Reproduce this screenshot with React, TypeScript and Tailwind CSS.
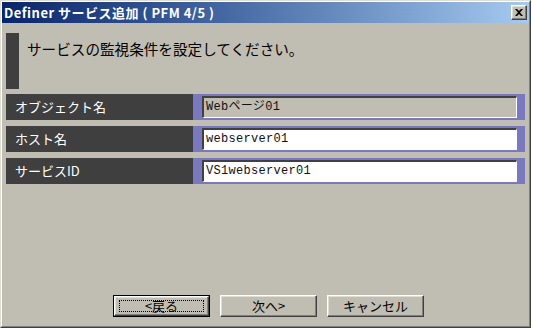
const jp = "font-['MS_Gothic','Noto_Sans_CJK_JP',sans-serif]";

const raised =
  "border border-t-white border-l-white border-r-[#404040] border-b-[#404040] shadow-[inset_-1px_-1px_0_#808080,inset_1px_1px_0_#dfdcd3]";

type Row = { label: string; value: string; disabled?: boolean };

const rows: Row[] = [
  { label: "オブジェクト名", value: "Webページ01", disabled: true },
  { label: "ホスト名", value: "webserver01" },
  { label: "サービスID", value: "VS1webserver01" },
];

const FieldRow = ({ label, value, disabled }: Row) => (
  <div className="flex h-[26px]">
    <div className={`w-[187px] bg-[#3f3f3f] text-white text-[13px] leading-[26px] pl-[9px] ${jp}`}>{label}</div>
    <div className="flex-1 bg-[#7a78bf] pl-[9px] pr-[8px] pt-[2px]">
      <div
        className={`h-[22px] border-t-2 border-l-2 border-t-[#404040] border-l-[#404040] border-b border-r border-b-white border-r-white ${
          disabled ? "bg-[#c0bdb2]" : "bg-white"
        } pl-[2px] text-[12px] leading-[19px] text-[#111] font-['Liberation_Mono','Noto_Sans_CJK_JP',monospace] tracking-[0.3px]`}
      >
        {value}
      </div>
    </div>
  </div>
);

const DialogButton = ({ text, isDefault }: { text: string; isDefault?: boolean }) => (
  <button
    type="button"
    className={`w-[97px] h-[22px] ${isDefault ? "border border-black" : ""} bg-[#c0bdb2] p-0`}
  >
    <div className={`w-full h-full ${raised} flex items-center justify-center`}>
      <div
        className={`${isDefault ? "border border-dotted border-black" : "border border-transparent"} w-[calc(100%-8px)] h-[calc(100%-6px)] flex items-center justify-center text-[13px] text-black ${jp}`}
      >
        {text}
      </div>
    </div>
  </button>
);

export default function App() {
  return (
    <div className="w-[533px] h-[330px] bg-white">
      <div className="w-[531px] h-[328px] border border-t-[#e0ddd5] border-l-[#e0ddd5] border-r-[#404040] border-b-[#404040]">
        <div className="w-full h-full flex flex-col bg-[#c0bdb2] border border-t-white border-l-white border-r-[#808080] border-b-[#808080]">
          {/* title bar */}
          <div className="h-[21px] flex items-center justify-between bg-gradient-to-r from-[#0a246a] to-[#a6caf0] pl-[2px] pr-[2px]">
            <span className={`text-white font-bold text-[13px] tracking-[0.5px] ${jp}`}>
              Definer サービス追加 ( PFM 4/5 )
            </span>
            <div className={`w-[16px] h-[15px] ${raised} bg-[#c0bdb2] flex items-center justify-center`}>
              <svg width="8" height="7" viewBox="0 0 8 7">
                <path d="M0 0h2l2 2 2-2h2L5 3.5 8 7H6L4 5 2 7H0l3-3.5z" fill="#000" />
              </svg>
            </div>
          </div>

          <div className="flex-1 flex flex-col px-[4px] pb-[9px]">
            {/* heading */}
            <div className="mt-[10px] h-[56px] flex">
              <div className="w-[13px] bg-[#3f3f3f]" />
              <div className={`pl-[8px] pt-[5px] text-[14.6px] text-black ${jp}`}>
                サービスの監視条件を設定してください。
              </div>
            </div>

            <div className="mt-[5px] flex flex-col gap-[6px]">
              {rows.map((r) => (
                <FieldRow key={r.label} {...r} />
              ))}
            </div>

            <div className="flex-1" />

            <div className="flex justify-center gap-[10px] pl-[6px]">
              <DialogButton text="<戻る" isDefault />
              <DialogButton text="次へ>" />
              <DialogButton text="キャンセル" />
            </div>
          </div>
        </div>
      </div>
    </div>
  );
}
